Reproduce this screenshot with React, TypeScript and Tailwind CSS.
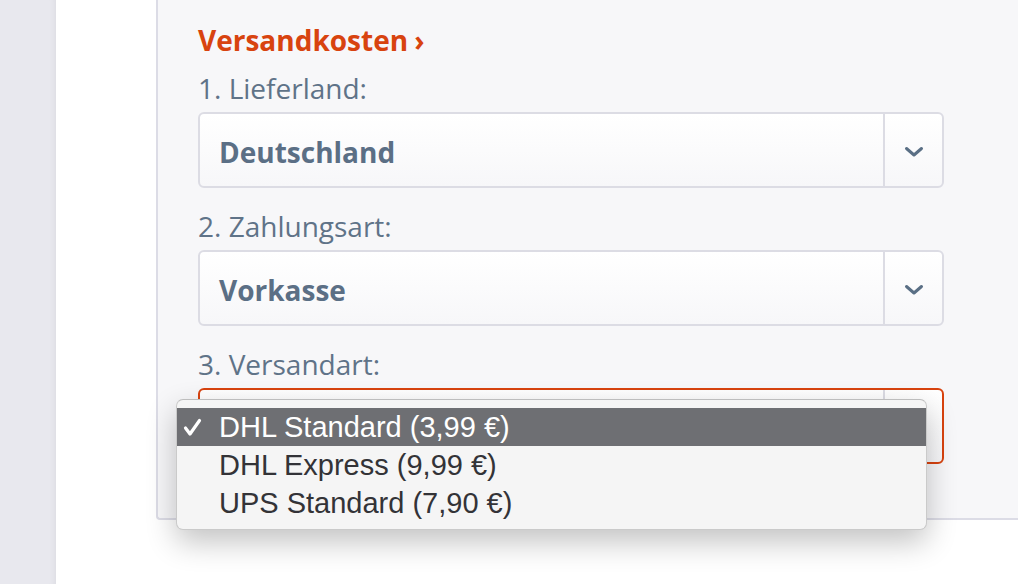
import React from "react";

const sans = "font-['Open_Sans',sans-serif]";

function Chevron() {
  return (
    <svg width="20" height="12" viewBox="0 0 20 12" className="text-[#5a6f85]">
      <path d="M2.5 2.5 L10 9 L17.5 2.5" fill="none" stroke="currentColor" strokeWidth="3" strokeLinecap="round" strokeLinejoin="round" />
    </svg>
  );
}

function Check() {
  return (
    <svg width="19" height="19" viewBox="0 0 19 19">
      <path d="M2.5 10 L7 16 L16.5 2.5" fill="none" stroke="currentColor" strokeWidth="3.2" strokeLinecap="round" strokeLinejoin="round" />
    </svg>
  );
}

function Select({ value, active }: { value: string; active?: boolean }) {
  return (
    <div
      className={`flex h-[76px] w-[746px] items-stretch rounded-[6px] border-2 bg-gradient-to-b from-white to-[#f7f7f9] ${
        active ? "border-[#d8430f]" : "border-[#dcdce4]"
      }`}
    >
      <div className="flex flex-1 items-center pl-[19px] pt-[4px] text-[28px] font-bold text-[#5b6f85]">{value}</div>
      <div className="flex w-[59px] items-center justify-center border-l-2 border-[#dcdce4] pt-[4px]">
        <Chevron />
      </div>
    </div>
  );
}

const options = [
  { label: "DHL Standard (3,99 €)", checked: true },
  { label: "DHL Express (9,99 €)", checked: false },
  { label: "UPS Standard (7,90 €)", checked: false },
];

export default function App() {
  return (
    <div className={`flex h-[584px] w-[1018px] overflow-hidden bg-white ${sans}`}>
      <div className="w-[56px] shrink-0 bg-[#e8e8ee] shadow-[inset_-6px_0_6px_-5px_rgba(0,0,0,0.06)]" />
      <div className="w-[100px] shrink-0 bg-white" />
      <div className="flex-1 self-start">
        <div className="relative h-[520px] w-[900px] rounded-bl-[4px] border-b-2 border-l-2 border-[#dcdce6] bg-[#f7f7f9] pl-[40px] pt-[22px]">
          <h2 className="flex items-center text-[28px] font-bold leading-[36px] text-[#d8430f]">
            Versandkosten<span className="ml-[6px] text-[28px]">›</span>
          </h2>

          <div className="mt-[12px] text-[28px] leading-[36px] text-[#5f7388]">1. Lieferland:</div>
          <div className="mt-[6px]">
            <Select value="Deutschland" />
          </div>

          <div className="mt-[20px] text-[28px] leading-[36px] text-[#5f7388]">2. Zahlungsart:</div>
          <div className="mt-[6px]">
            <Select value="Vorkasse" />
          </div>

          <div className="mt-[20px] text-[28px] leading-[36px] text-[#5f7388]">3. Versandart:</div>
          <div className="relative mt-[6px]">
            <Select value="" active />

            {/* native dropdown menu */}
            <div className="absolute left-[-22px] top-[11px] w-[751px] rounded-[7px] border border-[#cacaca] border-t-[#bdbdbd] bg-[#f5f5f5] pb-[7px] pt-[8px] font-['Liberation_Sans',Arial,sans-serif] text-[29px] shadow-[0_12px_30px_rgba(0,0,0,0.24)]">
              {options.map((o) => (
                <div
                  key={o.label}
                  className={`flex h-[38px] items-center ${o.checked ? "bg-[#6e6f73] text-white" : "text-[#333337]"}`}
                >
                  <span className="flex w-[42px] pl-[6px]">{o.checked ? <Check /> : null}</span>
                  <span className="leading-none">{o.label}</span>
                </div>
              ))}
            </div>
          </div>
        </div>
      </div>
    </div>
  );
}
